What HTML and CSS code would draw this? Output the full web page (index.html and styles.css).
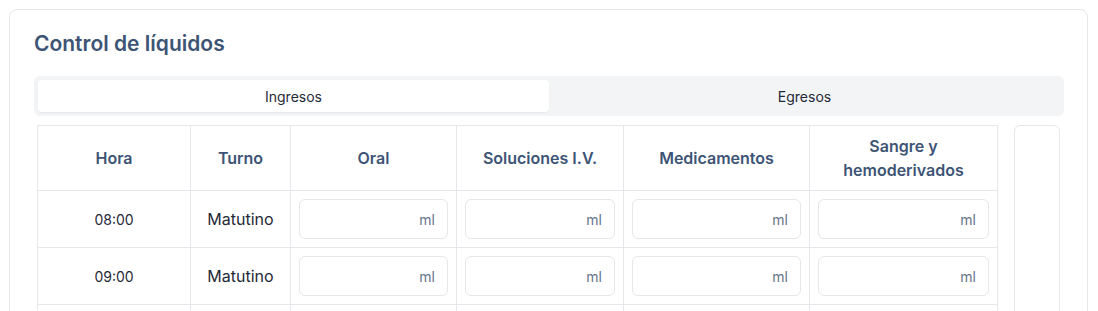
FILE: index.html
```html
<!DOCTYPE html>
<html lang="es">
<head>
  <meta charset="UTF-8">
  <meta name="viewport" content="width=device-width, initial-scale=1.0">
  <title>Control de líquidos</title>
  <link rel="stylesheet" href="styles.css">
</head>
<body>
  <div class="card">
    <h2 class="card-title">Control de líquidos</h2>

    <div class="tabs">
      <button class="tab active">Ingresos</button>
      <button class="tab">Egresos</button>
    </div>

    <div class="panel">
      <table class="fluids">
        <colgroup>
          <col class="c-hora">
          <col class="c-turno">
          <col class="c-oral">
          <col class="c-sol">
          <col class="c-med">
          <col class="c-sangre">
        </colgroup>
        <thead>
          <tr>
            <th>Hora</th>
            <th>Turno</th>
            <th>Oral</th>
            <th>Soluciones I.V.</th>
            <th>Medicamentos</th>
            <th>Sangre y hemoderivados</th>
          </tr>
        </thead>
        <tbody>
          <tr>
            <td class="hora">08:00</td>
            <td class="turno">Matutino</td>
            <td><input type="text" placeholder="ml"></td>
            <td><input type="text" placeholder="ml"></td>
            <td><input type="text" placeholder="ml"></td>
            <td><input type="text" placeholder="ml"></td>
          </tr>
          <tr>
            <td class="hora">09:00</td>
            <td class="turno">Matutino</td>
            <td><input type="text" placeholder="ml"></td>
            <td><input type="text" placeholder="ml"></td>
            <td><input type="text" placeholder="ml"></td>
            <td><input type="text" placeholder="ml"></td>
          </tr>
          <tr>
            <td class="hora">10:00</td>
            <td class="turno">Matutino</td>
            <td><input type="text" placeholder="ml"></td>
            <td><input type="text" placeholder="ml"></td>
            <td><input type="text" placeholder="ml"></td>
            <td><input type="text" placeholder="ml"></td>
          </tr>
        </tbody>
      </table>
      <div class="side-box"></div>
    </div>
  </div>
</body>
</html>
```

FILE: styles.css
```css
body {
  font-family: Inter, "Noto Sans", Arial, sans-serif;
  background-color: #ffffff;
  margin: 0;
  padding: 9px 10px 0 9px;
  overflow: hidden;
}
.card {
  border: 1px solid #e5e7eb;
  border-radius: 8px;
  padding: 20px 23px 0 24px;
  height: 400px;
}
.card-title {
  margin: 0 0 18px 0;
  font-size: 21px;
  line-height: 28px;
  font-weight: 600;
  color: #3d5475;
}
.tabs {
  display: flex;
  background-color: #f3f4f6;
  border-radius: 6px;
  padding: 4px;
  height: 32px;
}
.tab {
  flex: 1;
  border: none;
  background: transparent;
  font-family: inherit;
  font-size: 14px;
  color: #1f2937;
  border-radius: 4px;
  cursor: pointer;
}
.tab.active {
  background-color: white;
  box-shadow: 0 1px 2px rgba(0, 0, 0, 0.06);
}
.panel {
  display: flex;
  align-items: flex-start;
  gap: 16px;
  margin-top: 9px;
  padding: 0 4px 0 3px;
}
.fluids {
  border-collapse: collapse;
  table-layout: fixed;
  width: 961px;
  flex-shrink: 0;
}
.c-hora { width: 153px; }
.c-turno { width: 100px; }
.c-oral { width: 166px; }
.c-sol { width: 167px; }
.c-med { width: 186px; }
.c-sangre { width: 188px; }
.fluids th, .fluids td {
  border: 1px solid #e5e7eb;
  text-align: center;
}
.fluids th {
  font-size: 16px;
  font-weight: 600;
  line-height: 24px;
  color: #3d5475;
  padding: 8px 16px;
  height: 48px;
}
.fluids td {
  padding: 8px;
  height: 40px;
  color: #1f2937;
}
.hora {
  font-size: 14px;
}
.turno {
  font-size: 16px;
}
.fluids input {
  display: block;
  box-sizing: border-box;
  width: 100%;
  height: 40px;
  border: 1px solid #e5e7eb;
  border-radius: 6px;
  padding: 0 12px;
  font-family: inherit;
  font-size: 14px;
  text-align: right;
  outline: none;
}
.fluids input::placeholder {
  color: #64748b;
}
.side-box {
  width: 45px;
  height: 300px;
  border: 1px solid #e5e7eb;
  border-radius: 6px 6px 0 0;
}
```
